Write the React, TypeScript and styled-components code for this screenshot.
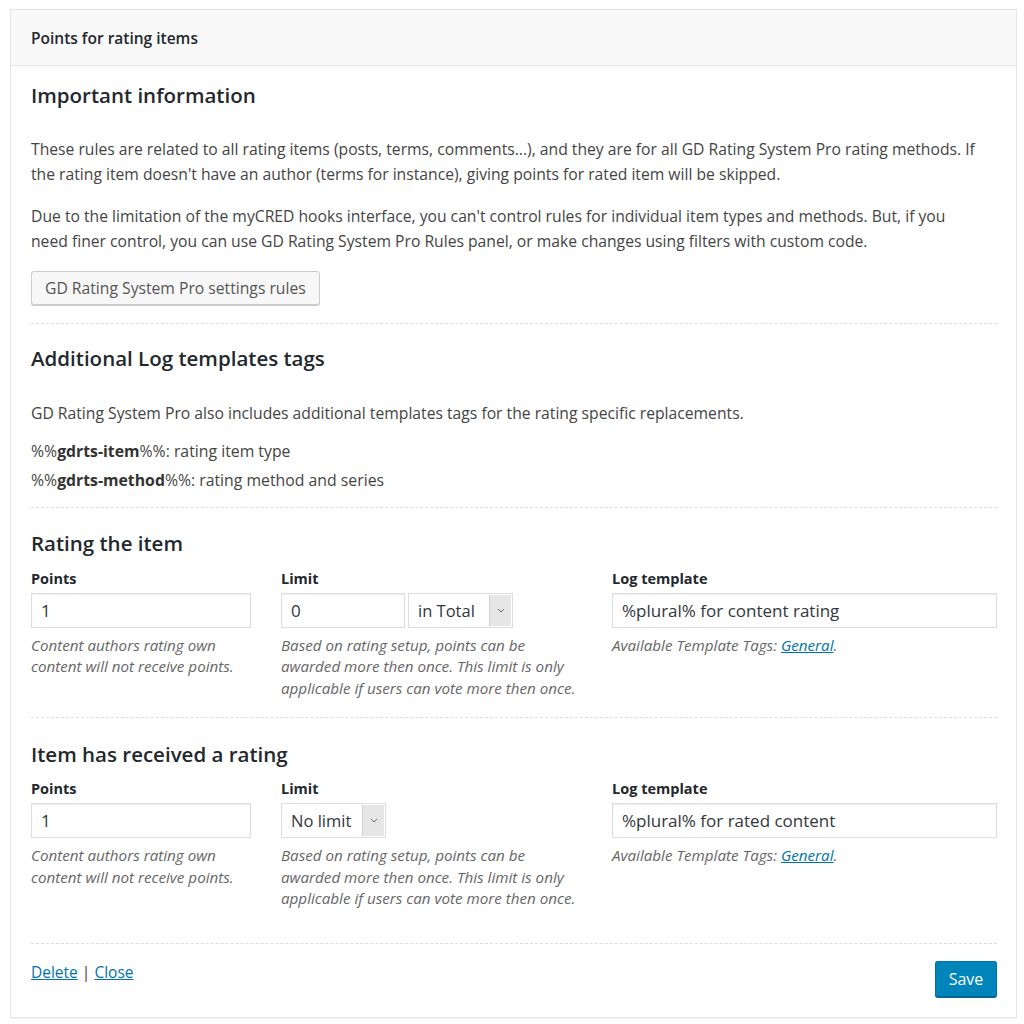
import React from 'react';
import styled, { createGlobalStyle } from 'styled-components';

const GlobalStyle = createGlobalStyle`
  html, body {
    margin: 0;
    padding: 0;
    background: #ffffff;
  }
  body {
    font-family: "Open Sans", "Noto Sans", sans-serif;
    color: #444;
  }
  * {
    box-sizing: border-box;
  }
`;

const Panel = styled.div`
  margin: 9px 7px 7px 10px;
  border: 1px solid #e5e5e5;
  box-shadow: 0 1px 1px rgba(0, 0, 0, 0.04);
  background: #fff;
`;

const PanelHeader = styled.div`
  height: 56px;
  display: flex;
  align-items: center;
  padding: 1px 20px 0;
  background: #f9f9f9;
  border-bottom: 1px solid #e5e5e5;
  font-size: 15.5px;
  font-weight: 600;
  color: #23282d;
`;

const PanelBody = styled.div`
  padding: 0 19px 0 20px;
`;

const Section = styled.div<{ $top: number; $bottom: number }>`
  padding-top: ${p => p.$top}px;
  padding-bottom: ${p => p.$bottom}px;
  border-bottom: 1px dashed #ddd;
`;

const Heading = styled.h3<{ $gap: number }>`
  margin: 0 0 ${p => p.$gap}px;
  font-size: 20.5px;
  line-height: 27px;
  font-weight: 600;
  color: #23282d;
`;

const Para = styled.p<{ $gap?: number }>`
  margin: 0 0 ${p => p.$gap ?? 18}px;
  max-width: 950px;
  font-size: 15.7px;
  line-height: 24.5px;
  color: #444;
`;

const TagLine = styled.p`
  margin: 0 0 5px;
  font-size: 15.8px;
  line-height: 24px;
  color: #444;

  &:last-child {
    margin-bottom: 0;
  }

  b {
    color: #333;
    font-weight: 700;
  }
`;

const SecondaryButton = styled.button`
  height: 34px;
  padding: 0 13px;
  border: 1px solid #ccc;
  border-radius: 3px;
  background: #f7f7f7;
  box-shadow: 0 1px 0 #ccc;
  color: #555;
  font-family: inherit;
  font-size: 15.7px;
  cursor: pointer;
`;

const FieldGrid = styled.div`
  display: grid;
  grid-template-columns: 220px 301px 1fr;
  column-gap: 30px;
`;

const Field = styled.div`
  display: flex;
  flex-direction: column;
`;

const Label = styled.label`
  font-size: 14.5px;
  line-height: 20px;
  font-weight: 700;
  color: #23282d;
  margin-bottom: 4px;
`;

const Controls = styled.div`
  display: flex;
  gap: 3px;
`;

const TextInput = styled.input<{ $width?: number }>`
  width: ${p => (p.$width ? `${p.$width}px` : '100%')};
  height: 35px;
  padding: 0 9px;
  border: 1px solid #ddd;
  box-shadow: inset 0 1px 2px rgba(0, 0, 0, 0.07);
  background: #fff;
  color: #32373c;
  font-family: inherit;
  font-size: 17px;
  outline: none;
`;

const SelectBox = styled.div<{ $width: number }>`
  width: ${p => p.$width}px;
  height: 35px;
  display: flex;
  align-items: stretch;
  border: 1px solid #ddd;
  background: #fff;
  color: #32373c;
  font-size: 16.5px;
`;

const SelectValue = styled.span`
  flex: 1;
  display: flex;
  align-items: center;
  padding-left: 9px;
  white-space: nowrap;
`;

const SelectArrow = styled.span`
  width: 22px;
  margin: 1px;
  display: flex;
  align-items: center;
  justify-content: center;
  background: #e6e6e6;
  border-left: 1px solid #cfcfcf;
`;

const Help = styled.p`
  margin: 7px 0 0;
  max-width: 295px;
  font-size: 15.2px;
  line-height: 21.5px;
  font-style: italic;
  color: #666;
`;

const Link = styled.a`
  color: #0073aa;
  text-decoration: underline;
  cursor: pointer;
`;

const Footer = styled.div`
  display: flex;
  align-items: flex-end;
  justify-content: space-between;
  padding: 16px 0 20px;
`;

const FooterLinks = styled.div`
  font-size: 15.5px;
  line-height: 24px;
  color: #444;
  padding-bottom: 13px;
`;

const PrimaryButton = styled.button`
  width: 62px;
  height: 36px;
  border: 1px solid #0073aa;
  border-bottom-color: #006799;
  border-radius: 3px;
  background: #0085ba;
  box-shadow: 0 1px 0 #006799;
  color: #fff;
  font-family: inherit;
  font-size: 16px;
  cursor: pointer;
`;

const Chevron = () => (
  <svg width="8" height="5" viewBox="0 0 8 5">
    <path d="M1 1l3 3 3-3" fill="none" stroke="#666" strokeWidth="1" />
  </svg>
);

const Select: React.FC<{ value: string; width: number }> = ({ value, width }) => (
  <SelectBox $width={width}>
    <SelectValue>{value}</SelectValue>
    <SelectArrow>
      <Chevron />
    </SelectArrow>
  </SelectBox>
);

interface RuleProps {
  title: string;
  withNumber: boolean;
  select: string;
  selectWidth: number;
  template: string;
  top: number;
  bottom: number;
  labelGap: number;
}

const RuleSection: React.FC<RuleProps> = ({
  title,
  withNumber,
  select,
  selectWidth,
  template,
  top,
  bottom,
  labelGap,
}) => (
  <Section $top={top} $bottom={bottom}>
    <Heading $gap={labelGap}>{title}</Heading>
    <FieldGrid>
      <Field>
        <Label>Points</Label>
        <TextInput defaultValue="1" />
        <Help>Content authors rating own content will not receive points.</Help>
      </Field>
      <Field>
        <Label>Limit</Label>
        <Controls>
          {withNumber && <TextInput $width={124} defaultValue="0" />}
          <Select value={select} width={selectWidth} />
        </Controls>
        <Help>
          Based on rating setup, points can be awarded more then once. This limit is only applicable if users can
          vote more then once.
        </Help>
      </Field>
      <Field>
        <Label>Log template</Label>
        <TextInput defaultValue={template} />
        <Help>
          Available Template Tags: <Link>General</Link>.
        </Help>
      </Field>
    </FieldGrid>
  </Section>
);

const App: React.FC = () => {
  return (
    <>
      <GlobalStyle />
      <Panel>
        <PanelHeader>Points for rating items</PanelHeader>
        <PanelBody>
          <Section $top={16} $bottom={18}>
            <Heading $gap={28}>Important information</Heading>
            <Para>
              These rules are related to all rating items (posts, terms, comments...), and they are for all GD Rating
              System Pro rating methods. If the rating item doesn't have an author (terms for instance), giving points
              for rated item will be skipped.
            </Para>
            <Para $gap={18}>
              Due to the limitation of the myCRED hooks interface, you can't control rules for individual item types
              and methods. But, if you need finer control, you can use GD Rating System Pro Rules panel, or make
              changes using filters with custom code.
            </Para>
            <SecondaryButton>GD Rating System Pro settings rules</SecondaryButton>
          </Section>

          <Section $top={21} $bottom={15}>
            <Heading $gap={29}>Additional Log templates tags</Heading>
            <Para $gap={13}>
              GD Rating System Pro also includes additional templates tags for the rating specific replacements.
            </Para>
            <TagLine>
              %%<b>gdrts-item</b>%%: rating item type
            </TagLine>
            <TagLine>
              %%<b>gdrts-method</b>%%: rating method and series
            </TagLine>
          </Section>

          <RuleSection
            title="Rating the item"
            withNumber
            select="in Total"
            selectWidth={105}
            template="%plural% for content rating"
            top={22}
            bottom={18}
            labelGap={12}
          />

          <RuleSection
            title="Item has received a rating"
            withNumber={false}
            select="No limit"
            selectWidth={105}
            template="%plural% for rated content"
            top={23}
            bottom={33}
            labelGap={11}
          />

          <Footer>
            <FooterLinks>
              <Link>Delete</Link> | <Link>Close</Link>
            </FooterLinks>
            <PrimaryButton>Save</PrimaryButton>
          </Footer>
        </PanelBody>
      </Panel>
    </>
  );
};

export default App;
